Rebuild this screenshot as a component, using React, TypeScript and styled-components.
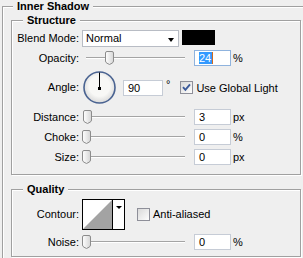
import styled, { createGlobalStyle } from 'styled-components'

const GlobalStyle = createGlobalStyle`
  html, body {
    margin: 0;
    padding: 0;
    background: #efefef;
    overflow: hidden;
  }
  body {
    font-family: "Liberation Sans", Arial, sans-serif;
    font-size: 11px;
    color: #000;
  }
`

const Page = styled.div`
  width: 303px;
  height: 258px;
  overflow: hidden;
  padding-left: 2px;
  box-sizing: border-box;
`

const Panel = styled.fieldset`
  margin: 0;
  padding: 0 0 12px 8px;
  width: 330px;
  box-sizing: border-box;
  border: 1px solid #a0a0a0;
  box-shadow: inset 1px 1px 0 #fff;
  min-inline-size: 0;
`

const Group = styled.fieldset<{ $top: number; $bottom: number }>`
  margin: ${(p) => p.$top}px 0 0 0;
  padding: 0 0 ${(p) => p.$bottom}px 0;
  width: 290px;
  box-sizing: border-box;
  border: 1px solid #a0a0a0;
  box-shadow: inset 1px 1px 0 #fff, 1px 1px 0 #fff;
  min-inline-size: 0;
`

const Title = styled.legend<{ $indent: number }>`
  margin-left: ${(p) => p.$indent}px;
  padding: 0 4px;
  height: 13px;
  line-height: 13px;
  font-weight: bold;
  background: #efefef;
`

const Row = styled.div<{ $h: number; $top?: boolean }>`
  display: flex;
  align-items: ${(p) => (p.$top ? 'flex-start' : 'center')};
  height: ${(p) => p.$h}px;
  padding-top: ${(p) => (p.$top ? 3 : 0)}px;
  box-sizing: border-box;
`

const Label = styled.div`
  flex: none;
  width: 66px;
  margin-left: 1px;
  margin-right: 3px;
  text-align: right;
  line-height: 17px;
  white-space: nowrap;
`

const Select = styled.div`
  flex: none;
  display: flex;
  justify-content: space-between;
  width: 97px;
  height: 17px;
  padding: 0 4px 0 3px;
  box-sizing: border-box;
  background: #fff;
  border: 1px solid #b8bcc4;
  line-height: 15px;
`

const Caret = styled.span`
  width: 0;
  height: 0;
  margin-top: 7px;
  border-left: 3.5px solid transparent;
  border-right: 3.5px solid transparent;
  border-top: 4px solid #000;
`

const Swatch = styled.div`
  flex: none;
  width: 33px;
  height: 15px;
  margin-left: 3px;
  background: #000;
`

const Slider = styled.div`
  position: relative;
  flex: none;
  display: flex;
  align-items: center;
  width: 104px;
  height: 14px;
`

const Track = styled.div`
  width: 99px;
  margin-left: 4px;
  border-top: 1px solid #a4a4a4;
  border-bottom: 1px solid #fff;
`

const ThumbWrap = styled.div`
  position: absolute;
  top: 0;
  width: 9px;
  height: 14px;
`

const Field = styled.div<{ $w: number; $focus?: boolean }>`
  flex: none;
  display: flex;
  align-items: center;
  width: ${(p) => p.$w}px;
  height: 16px;
  margin-left: 8px;
  padding-left: 4px;
  box-sizing: border-box;
  background: #fff;
  border: 1px solid ${(p) => (p.$focus ? '#8fb3de' : '#c6ccd6')};
`

const Selected = styled.span`
  background: #3399ff;
  color: #fff;
  line-height: 12px;
  padding: 0 1px 0 0;
`

const TextCursor = styled.span`
  width: 1px;
  height: 12px;
  background: #d46a1c;
`

const Unit = styled.span`
  margin-left: 2px;
`

const DialBox = styled.div`
  flex: none;
  margin-left: 1px;
  width: 33px;
  height: 33px;
`

const AngleField = styled(Field)`
  margin-left: 7px;
`

const Degree = styled.span`
  margin-left: 3px;
  align-self: flex-start;
  margin-top: 11px;
  line-height: 11px;
`

const CheckWrap = styled.div<{ $gap: number }>`
  flex: none;
  width: 13px;
  height: 13px;
  margin-left: ${(p) => p.$gap}px;
`

const CheckText = styled.span`
  margin-left: 3px;
  white-space: nowrap;
`

const ContourBox = styled.div`
  flex: none;
  display: flex;
  height: 31px;
  box-sizing: border-box;
  border: 1px solid #000;
  background: #fff;
`

const ContourPreview = styled.div`
  width: 29px;
  height: 29px;
  border-right: 1px solid #000;
`

const ContourMenu = styled.div`
  width: 11px;
  display: flex;
  justify-content: center;
  padding-top: 6px;
  box-sizing: border-box;
  background: #fff;
`

const SmallCaret = styled.span`
  width: 0;
  height: 0;
  border-left: 3px solid transparent;
  border-right: 3px solid transparent;
  border-top: 3px solid #000;
`

const Thumb = () => (
  <svg width="9" height="14" viewBox="0 0 9 14">
    <defs>
      <linearGradient id="tg" x1="0" y1="0" x2="1" y2="0">
        <stop offset="0" stopColor="#ffffff" />
        <stop offset="1" stopColor="#d6d6d6" />
      </linearGradient>
    </defs>
    <path
      d="M2 0.5 H7 Q8.5 0.5 8.5 2 V10 Q8.5 11.5 7 12.2 L4.5 13.5 L2 12.2 Q0.5 11.5 0.5 10 V2 Q0.5 0.5 2 0.5 Z"
      fill="url(#tg)"
      stroke="#8c8c8c"
    />
  </svg>
)

const SliderControl = ({ pct }: { pct: number }) => (
  <Slider>
    <Track />
    <ThumbWrap style={{ left: 4 + pct * 99 - 4.5 }}>
      <Thumb />
    </ThumbWrap>
  </Slider>
)

const Check = ({ checked, gap }: { checked?: boolean; gap: number }) => (
  <CheckWrap $gap={gap}>
    <svg width="13" height="13" viewBox="0 0 13 13">
      <defs>
        <linearGradient id="cg" x1="0" y1="0" x2="1" y2="1">
          <stop offset="0" stopColor="#d8d8d8" />
          <stop offset="1" stopColor="#ffffff" />
        </linearGradient>
      </defs>
      <rect x="0.5" y="0.5" width="12" height="12" fill="url(#cg)" stroke="#8e8f99" />
      {checked && (
        <path d="M3 6.2 L5.4 8.8 L10 3.4" fill="none" stroke="#3b5a9a" strokeWidth="1.9" />
      )}
    </svg>
  </CheckWrap>
)

const Dial = () => (
  <DialBox>
    <svg width="33" height="33" viewBox="0 0 33 33">
      <defs>
        <radialGradient id="dg" cx="0.5" cy="0.45" r="0.55">
          <stop offset="0.6" stopColor="#f8f8f6" />
          <stop offset="1" stopColor="#d9d9d9" />
        </radialGradient>
      </defs>
      <circle cx="16.5" cy="16.5" r="15.5" fill="url(#dg)" stroke="#4a6391" strokeWidth="1.6" />
      <line x1="16.5" y1="1.5" x2="16.5" y2="17" stroke="#000" strokeWidth="1" />
      <rect x="15" y="16" width="3" height="3" fill="#000" />
    </svg>
  </DialBox>
)

const SliderRow = ({ label, pct, value, unit }: { label: string; pct: number; value: string; unit: string }) => (
  <Row $h={20}>
    <Label>{label}</Label>
    <SliderControl pct={pct} />
    <Field $w={37}>{value}</Field>
    <Unit>{unit}</Unit>
  </Row>
)

export default function App() {
  return (
    <Page>
      <GlobalStyle />
      <Panel>
        <Title $indent={2}>Inner Shadow</Title>
        <Group $top={1} $bottom={7}>
          <Title $indent={11}>Structure</Title>
          <Row $h={21} $top>
            <Label>Blend Mode:</Label>
            <Select>
              <span>Normal</span>
              <Caret />
            </Select>
            <Swatch />
          </Row>
          <Row $h={20}>
            <Label>Opacity:</Label>
            <SliderControl pct={0.24} />
            <Field $w={37} $focus>
              <Selected>24</Selected>
              <TextCursor />
            </Field>
            <Unit>%</Unit>
          </Row>
          <Row $h={39}>
            <Label>Angle:</Label>
            <Dial />
            <AngleField $w={40}>90</AngleField>
            <Degree>°</Degree>
            <Check checked gap={10} />
            <CheckText>Use Global Light</CheckText>
          </Row>
          <SliderRow label="Distance:" pct={0.02} value="3" unit="px" />
          <SliderRow label="Choke:" pct={0} value="0" unit="%" />
          <SliderRow label="Size:" pct={0} value="0" unit="px" />
        </Group>
        <Group $top={8} $bottom={4}>
          <Title $indent={11}>Quality</Title>
          <Row $h={36}>
            <Label>Contour:</Label>
            <ContourBox>
              <ContourPreview>
                <svg width="29" height="29" viewBox="0 0 29 29">
                  <polygon points="0,29 29,0 29,29" fill="#a3a3a3" />
                </svg>
              </ContourPreview>
              <ContourMenu>
                <SmallCaret />
              </ContourMenu>
            </ContourBox>
            <Check gap={12} />
            <CheckText>Anti-aliased</CheckText>
          </Row>
          <SliderRow label="Noise:" pct={0} value="0" unit="%" />
        </Group>
      </Panel>
    </Page>
  )
}
